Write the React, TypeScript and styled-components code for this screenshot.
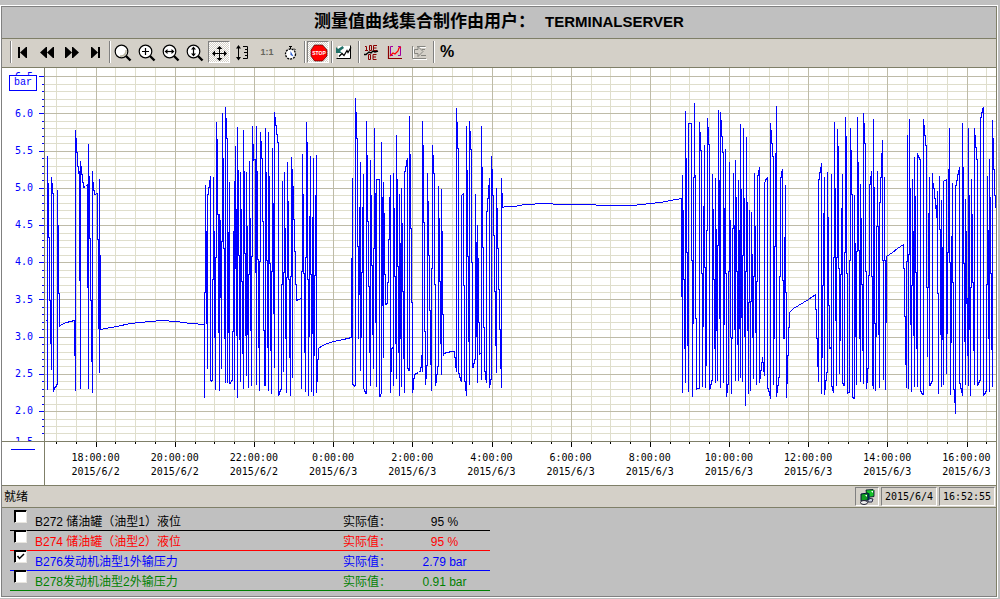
import React, { useState } from "react";
import styled, { createGlobalStyle, css } from "styled-components";

const color = {
  face: "#d4d0c8",
  back: "#c0c0c0",
  edge: "#7f7f68",
  shadow: "#808080",
  blue: "#0000ff",
  gridMinor: "#dfdecc",
  gridMajor: "#bebba8",
};

const sans = `"Liberation Sans", "Noto Sans CJK SC", sans-serif`;
const mono = `"DejaVu Sans Mono", monospace`;

const GlobalStyle = createGlobalStyle`
  body {
    margin: 0;
    background: ${color.back};
    font-family: ${sans};
    font-size: 12px;
    color: #000;
  }
  * { box-sizing: border-box; }
`;

const Highlight = styled.main`
  margin: 5px 2px 0 0;
  border: 1px solid #fff;
`;

const Frame = styled.div`
  border: 1px solid ${color.shadow};
  border-right-color: ${color.edge};
`;

const TitleBar = styled.h1`
  display: flex;
  align-items: center;
  justify-content: center;
  gap: 10px;
  height: 32px;
  margin: 0;
  padding-bottom: 1px;
  border-bottom: 1px solid ${color.edge};
  font-size: 17px;
  font-weight: bold;
  line-height: 24px;
`;

const UserName = styled.span`
  font-size: 15px;
`;

/* ---------- toolbar ---------- */

const Toolbar = styled.div`
  display: flex;
  align-items: flex-start;
  height: 29px;
  padding: 2px 0 0 8px;
  background: ${color.face};
  border-bottom: 1px solid ${color.edge};
`;

const Separator = styled.span<{ $gap?: number }>`
  width: 2px;
  height: 22px;
  margin-left: ${(p) => p.$gap ?? 1}px;
  border-left: 1px solid ${color.shadow};
  border-right: 1px solid #fff;
`;

const ToolButton = styled.button<{ $pressed?: boolean }>`
  display: flex;
  align-items: center;
  justify-content: center;
  flex: none;
  width: 22px;
  height: 22px;
  margin: 0 1px;
  padding: 0;
  border: 1px solid transparent;
  background: none;
  color: #000;
  font-family: ${sans};
  ${(p) =>
    p.$pressed &&
    css`
      border-color: ${color.shadow} #fff #fff ${color.shadow};
      background: repeating-conic-gradient(#fff 0 25%, ${color.face} 0 50%) 0 0 / 2px 2px;
    `}
`;

const RatioText = styled.span`
  color: #66655e;
  font-size: 9px;
  font-weight: bold;
`;

const PercentText = styled.span`
  font-size: 16px;
  font-weight: bold;
  line-height: 20px;
`;

const IconSvg = styled.svg`
  display: block;
  flex: none;
  width: 20px;
  height: 20px;
`;

const Icon = ({ children }: { children: React.ReactNode }) => (
  <IconSvg viewBox="0 0 20 20" aria-hidden="true">
    {children}
  </IconSvg>
);

const Lens = ({ children }: { children?: React.ReactNode }) => (
  <Icon>
    <circle cx="8.5" cy="9.5" r="6.3" fill="#fff" stroke="#000" strokeWidth="1.2" />
    <path d="M13 14l4.5 4.5" stroke="#000" strokeWidth="2.4" />
    {children}
  </Icon>
);

const icons = {
  first: (
    <Icon>
      <path d="M4 5h2v11H4zM6 10.5L12 5h1v11h-1z" />
    </Icon>
  ),
  back: (
    <Icon>
      <path d="M2 10.500L8 5h1v11H8zM9 10.500L15 5h1v11h-1z" />
    </Icon>
  ),
  forward: (
    <Icon>
      <path d="M3 5h1l6 5.500L4 16H3zM10 5h1l6 5.500-6 5.500h-1z" />
    </Icon>
  ),
  last: (
    <Icon>
      <path d="M5 5h1l6 5.500L6 16H5zM12 5h2v11h-2z" />
    </Icon>
  ),
  zoom: (
    <Lens>
      <path d="M13 8a5 5 0 0 1-6 6" fill="none" stroke="#bdb9a5" strokeWidth="1.6" />
    </Lens>
  ),
  zoomIn: (
    <Lens>
      <path d="M8.5 6v7M5 9.5h7" stroke="#000" strokeWidth="1.2" />
    </Lens>
  ),
  zoomX: (
    <Lens>
      <path d="M5 9.5h7" stroke="#000" strokeWidth="1.2" />
      <path d="M3.5 9.5L6.5 7v5zM13.5 9.5L10.500 7v5z" />
    </Lens>
  ),
  zoomY: (
    <Lens>
      <path d="M8.5 6v7" stroke="#000" strokeWidth="1.2" />
      <path d="M8.500 4.500L6 7.500h5zM8.500 14.500L6 11.500h5z" />
    </Lens>
  ),
  move: (
    <Icon>
      <path d="M10.500 6v11M5 11.500h11" stroke="#000" />
      <path d="M10.500 4l-3 3h6zM10.500 19l-3-3h6zM3 11.500l3-3v6zM18 11.500l-3-3v6z" />
    </Icon>
  ),
  scale: (
    <Icon>
      <path d="M5.500 5v12" stroke="#000" />
      <path d="M5.500 3L3 6.500h5zM5.500 18.500L3 15h5z" />
      <path d="M10 4.500h4.500v12H10M12 7.500h2.500M11 10.500h3.500M12 13.500h2.500" fill="none" stroke="#000" />
    </Icon>
  ),
  clock: (
    <Icon>
      <path d="M8 4.500h3M9.500 4.500v3M13 6.500l1.500 1.500" stroke="#000" />
      <circle cx="9.500" cy="12" r="5" fill="#fff" stroke="#000" strokeDasharray="2 1" strokeWidth="1.300" />
      <path d="M9.500 9v4l3 1.500z" fill="#2a5bd0" />
    </Icon>
  ),
  stop: (
    <Icon>
      <path d="M6.500 3h8L19 8v6l-4.500 5h-8L3 14V8z" fill="#f00" stroke="#400" strokeWidth=".7" />
      <text x="11" y="13" textAnchor="middle" fill="#fff" fontSize="5" fontWeight="bold">
        STOP
      </text>
    </Icon>
  ),
  restore: (
    <Icon>
      <path d="M3 4h12v13H3z" fill="#fff" />
      <path d="M1.500 16.500h14v-13" fill="none" stroke="#000" />
      <path d="M4 14.500l3-3 2 2 3-5 1 2 3-5" fill="none" stroke="#000" strokeWidth="1.300" />
      <path d="M1 5v6h6L5 9l4-3-1.500-2L3 7z" fill="#1f6f66" />
    </Icon>
  ),
  exponent: (
    <Icon>
      <path
        d="M3 4.500h1.500V9M3 8.500h3M9.500 3.500h-2v5h2zM15 3.500h-3.500v5H15M11.500 6h3M6.500 12.500h2v5h-2zM14.500 12.500H11v5h3.500M11 15h3"
        fill="none"
        stroke="#8b0000"
      />
      <path d="M2 12.500h2l3-2.500 2 1 2-2 2 1 3-1" fill="none" stroke="#000" strokeWidth="1.400" />
    </Icon>
  ),
  bounds: (
    <Icon>
      <path d="M2.500 4v12.500H16" fill="none" stroke="#8b0000" strokeWidth="1.200" />
      <path d="M7 4.500H4.500v9H7M12 4.500h2.500v9H12" fill="none" stroke="#a000a0" />
      <path d="M4 14l3-3 2 1 3-3 1-3 2-1" fill="none" stroke="#f00" strokeWidth="1.200" />
    </Icon>
  ),
  exportCurve: (
    <Icon>
      <path d="M3.500 5v12.500H17M8 5.500h8M12 13.500h4" fill="none" stroke="#fff" />
      <path d="M2.500 4v12.500H16M7 4.500h8.500M11 13.500h5M12 7.500h3" fill="none" stroke="#858580" />
      <path d="M4.500 7.500h3.500v-3l5 5-5 5v-3H4.500z" fill="#d4d0c8" stroke="#858580" />
    </Icon>
  ),
};

/* ---------- chart ---------- */

const Chart = styled.section`
  display: grid;
  grid-template-columns: 43px minmax(0, 1fr);
  background: #fff;
  border-bottom: 1px solid ${color.edge};
`;

const ValueAxis = styled.div`
  position: relative;
  display: flex;
  height: 373px;
  overflow: hidden;
  border-right: 1px solid ${color.edge};
  color: ${color.blue};
  font: 10px/12px ${mono};
`;

/* The lowest label is held just inside the axis, so its top edge stays visible. */
const ValueLabels = styled.div`
  display: grid;
  grid-auto-rows: minmax(0, 1fr);
  align-items: center;
  justify-items: end;
  flex: 1;
  height: 409px;
  margin-top: -10px;
  padding-right: 5px;

  span:last-child {
    align-self: start;
    padding-top: 6px;
  }
`;

const UnitBadge = styled.div`
  position: absolute;
  top: 7px;
  left: 7px;
  width: 28px;
  border: 1px solid ${color.blue};
  background: #fff;
  text-align: center;
  font: 10px/14px "Liberation Mono", monospace;
`;

const AxisTicks = styled.svg`
  display: block;
  flex: none;
  width: 6px;
  height: 373px;
`;

const Plot = styled.svg`
  display: block;
  width: 100%;
  height: 373px;

  path {
    fill: none;
    vector-effect: non-scaling-stroke;
  }
`;

const PenCell = styled.div`
  border-top: 1px solid ${color.edge};
  border-right: 1px solid ${color.edge};
  padding: 7px 9px;
`;

const PenLine = styled.div`
  height: 1px;
  background: ${color.blue};
`;

const TimeAxis = styled.div`
  overflow: hidden;
  border-top: 1px solid ${color.edge};
`;

const TimeTicks = styled.svg`
  display: block;
  width: 100%;
  height: 5px;
`;

const TimeLabels = styled.div`
  display: grid;
  grid-auto-flow: column;
  grid-auto-columns: minmax(0, 1fr);
  margin: 0 -10px 0 11px;
  padding: 4px 0 6px;
  text-align: center;
  font: 10px/14px ${mono};
`;

const yAt = (v: number) => Math.floor(411.6 - (v - 2) * 74.4);
const xAt = (h: number) => Math.floor(96.2 + (h - 18) * 39.585);

const gridRows = Array.from({ length: 50 }, (_, i) => ({ y: yAt(1.6 + i / 10 + 0.0001), major: (i + 1) % 5 === 0 })).filter(
  (r) => r.y >= 68
);
const gridColumns = Array.from({ length: 48 }, (_, i) => ({
  x: xAt(17 + i / 2),
  major: i % 4 === 2,
})).filter((c) => c.x < 996);

const rowPath = (major: boolean) =>
  gridRows.filter((r) => r.major === major).map((r) => `M45 ${r.y + 0.5}H996`).join("");
const columnPath = (major: boolean) =>
  gridColumns.filter((c) => c.major === major).map((c) => `M${c.x + 0.5} 68V441`).join("");

/* Pressure swings: each entry is a column with its highest and lowest point. */
const swings = `
47 156 389,48 183 237,49 237 300,50 300 343,51 177 369,52 183 193,53 193 391,54 387 389,55 386 387,56 384 386,57 190 384,
58 225 293,59 293 326,74 320 355,75 130 390,76 138 152,77 152 166,78 166 173,79 171 280,80 161 388,81 166 174,82 174 182,
83 182 187,87 184 287,88 144 388,89 176 238,90 238 300,91 300 361,92 171 392,93 182 190,94 190 194,97 193 239,98 239 328,
99 179 372,100 255 329,204 292 397,205 185 292,206 231 323,207 194 368,208 187 194,209 180 187,210 176 380,211 380 381,
212 279 380,213 177 279,214 231 337,215 257 389,216 122 257,217 139 214,218 214 332,219 214 390,220 220 297,221 241 368,
222 113 241,223 158 248,224 248 338,225 107 382,226 118 138,227 138 382,228 232 332,229 182 383,230 382 383,231 380 381,
232 331 380,233 231 331,234 181 389,235 146 268,236 209 335,237 127 397,238 170 255,239 255 339,240 172 381,241 209 281,
242 281 353,243 130 388,244 171 253,245 253 335,246 172 375,247 226 334,248 274 387,249 161 274,250 218 330,251 256 385,
252 126 256,253 144 160,255 159 272,256 126 384,257 171 259,258 259 347,259 261 390,260 132 261,261 141 158,262 158 221,
263 221 330,264 330 385,265 128 385,266 172 260,267 260 347,268 132 390,269 176 263,270 263 350,271 271 393,272 148 271,
273 203 313,274 112 367,275 117 125,276 125 134,277 134 142,278 142 395,279 391 394,280 389 391,281 284 389,282 181 284,
283 272 371,284 172 272,285 228 338,286 277 392,287 162 277,288 201 279,289 279 357,290 276 395,291 157 276,292 169 377,
293 186 219,294 219 251,295 251 284,296 284 300,301 271 388,302 154 271,303 194 273,304 273 352,305 257 391,306 122 257,
307 142 279,308 279 395,309 216 336,310 156 274,311 274 391,312 217 333,313 158 395,314 275 355,315 195 275,316 155 392,
317 359 381,318 348 359,351 258 337,352 178 384,353 384 385,354 385 386,355 98 385,356 112 138,357 138 246,358 246 338,
359 207 294,360 162 370,361 272 337,362 207 272,363 174 388,364 389 391,365 391 393,366 121 393,367 155 221,368 221 286,
369 286 352,370 160 385,371 195 265,372 265 334,373 248 368,374 128 248,375 193 322,376 179 386,379 179 396,380 394 396,
381 142 393,382 197 305,383 182 357,384 213 274,385 274 304,386 303 304,387 282 303,388 239 282,389 197 239,390 175 392,
391 348 371,393 173 385,394 208 276,395 276 343,396 135 378,397 179 266,398 266 352,399 194 395,400 243 338,401 188 386,
402 223 291,403 291 358,404 171 392,405 166 171,406 160 166,407 158 368,408 368 370,409 116 370,410 154 228,411 228 302,
412 302 392,413 378 389,414 374 378,420 367 371,421 355 367,422 121 371,423 145 222,424 222 331,425 331 384,426 365 378,
427 173 365,428 201 255,429 255 310,430 310 364,431 268 390,432 145 268,433 155 173,434 173 284,435 284 385,436 374 382,
437 366 374,438 186 366,439 218 281,440 281 343,441 189 374,442 231 314,443 314 355,454 351 357,455 357 367,456 108 371,
457 122 148,458 148 373,459 373 377,460 377 380,461 195 381,463 193 285,464 285 381,465 381 390,466 126 395,467 170 256,
468 256 341,469 121 384,470 131 149,471 149 262,472 262 367,473 363 367,474 359 363,475 194 359,476 242 336,477 225 382,
478 258 322,479 322 354,481 126 379,482 167 247,483 247 327,484 327 371,485 371 379,486 211 382,487 198 211,488 185 198,
489 178 387,490 379 384,491 156 379,492 169 195,493 195 235,494 235 291,495 291 345,496 188 372,497 208 248,498 248 289,
499 289 329,500 329 368,501 178 387,502 193 206,681 198 296,682 175 392,683 210 279,684 279 348,685 111 382,686 158 252,
687 252 345,688 123 391,691 123 260,692 260 396,693 177 323,694 103 177,695 175 318,696 318 389,699 122 388,700 132 150,
701 150 273,702 273 386,703 206 326,704 145 267,705 267 387,706 230 365,707 118 230,708 127 144,709 144 389,710 384 388,
711 380 384,712 174 380,713 209 279,714 279 348,715 178 382,716 229 330,717 245 380,718 110 245,719 180 318,720 112 387,
721 120 136,722 136 152,723 152 382,724 208 324,725 149 273,726 273 396,727 384 392,728 271 384,729 162 271,730 220 337,
731 337 393,732 228 338,733 173 228,734 225 329,735 160 380,736 197 271,737 271 344,738 180 380,739 230 328,740 124 377,
741 189 317,742 255 381,743 128 255,744 198 336,745 271 405,746 137 271,747 202 330,748 302 393,749 210 302,750 301 390,
751 212 301,752 254 337,753 276 378,754 173 276,755 226 332,756 281 384,757 175 281,758 170 175,759 167 382,760 370 378,
761 362 370,762 357 362,763 362 371,764 182 375,765 179 181,766 178 179,767 177 388,768 388 391,769 391 395,770 123 398,
771 130 143,772 143 156,773 156 384,774 246 338,775 153 246,776 106 396,777 385 392,778 377 385,779 276 377,780 177 276,
781 171 177,782 169 280,783 280 338,784 237 338,785 185 292,786 292 397,787 355 383,788 327 355,789 312 327,815 294 309,
816 309 338,817 338 366,818 179 381,819 172 179,820 167 172,821 163 393,822 285 357,823 213 285,824 177 394,825 380 389,
826 372 380,827 172 372,828 217 305,829 305 348,830 347 348,831 174 386,832 386 390,833 257 392,834 122 257,835 188 320,
836 257 385,837 129 257,838 146 268,839 268 373,840 274 340,841 208 274,842 174 383,843 383 385,844 252 385,845 117 252,
846 136 273,847 273 393,849 260 392,850 128 260,851 150 194,852 194 397,853 397 398,854 195 398,855 243 336,856 251 384,
857 117 251,858 162 250,859 250 338,860 184 381,861 218 284,862 284 350,863 113 383,864 123 143,865 143 271,866 271 388,
867 368 382,868 275 368,869 184 275,870 176 184,871 171 276,872 276 385,873 119 388,874 187 323,875 323 390,876 226 336,
877 171 226,878 226 334,879 202 387,880 177 202,881 153 177,882 140 260,883 260 379,884 177 260,885 260 389,886 256 322,
903 244 268,904 268 316,905 316 364,906 261 387,907 135 261,908 254 388,909 119 254,910 188 324,911 285 391,912 179 285,
913 231 335,914 157 386,915 196 272,916 272 348,917 153 386,918 155 157,919 157 159,920 159 391,921 391 393,922 393 394,
923 119 394,924 125 135,925 135 145,926 145 287,927 287 356,928 213 287,929 177 385,930 383 385,931 381 383,932 173 381,
933 183 188,934 188 198,935 198 208,936 205 217,937 191 293,938 293 393,939 176 229,940 229 334,941 200 386,942 247 339,
943 181 384,946 179 373,947 252 333,948 169 252,949 128 262,950 262 394,951 236 342,952 183 282,953 282 389,954 389 402,
955 185 413,956 180 185,957 174 180,958 170 174,959 167 383,960 383 388,961 388 392,962 123 395,963 167 263,964 263 341,
965 199 384,966 231 303,967 298 355,968 128 385,969 195 329,970 287 395,971 179 287,972 214 282,973 282 350,974 128 384,
975 135 147,976 147 159,977 159 385,978 382 384,979 380 382,980 117 380,981 112 117,982 108 112,983 107 395,984 393 394,
985 391 393,986 284 391,987 176 284,988 230 338,989 159 391,990 197 273,991 273 349,992 120 386,993 138 169,994 169 195,
995 195 207`;

const swingPath = swings
  .split(",")
  .map((entry) => entry.trim().split(" ").map(Number))
  .map(([x, top, bottom]) => `M${x + 0.5} ${top}V${bottom + 1}`)
  .join("");

/* Slow drifts between the pumping phases. */
const drifts = [
  "45,321 47,319",
  "59,325 66,322 74,320",
  "83,187 85,186 87,184",
  "94,194 97,193",
  "100,329 105,328 116,326 130,323 150,321 161,320 176,321 190,323 204,324",
  "253,159 255,159",
  "296,300 298,299 301,298",
  "318,348 322,345 327,343 333,341 343,339 351,337",
  "376,179 379,179",
  "391,348 393,347",
  "414,374 418,372 420,370",
  "443,353 447,352 451,351 454,351",
  "461,195 463,193",
  "479,353 481,353",
  "502,207 505,206 514,206 524,204 545,203 560,204 580,204 610,205 632,205 650,203 660,202 670,200 682,198",
  "688,123 691,123",
  "696,389 699,387",
  "789,312 793,308 798,305 803,302 808,299 815,294",
  "847,392 849,392",
  "886,256 892,252 897,248 903,244",
  "943,181 946,179",
];
const driftPath = drifts.map((d) => `M${d.split(" ").join("L")}`).join("");

const valueLabels = ["6.5", "6.0", "5.5", "5.0", "4.5", "4.0", "3.5", "3.0", "2.5", "2.0", "1.5"];
const timeLabels = [
  ["18:00:00", "2015/6/2"],
  ["20:00:00", "2015/6/2"],
  ["22:00:00", "2015/6/2"],
  ["0:00:00", "2015/6/3"],
  ["2:00:00", "2015/6/3"],
  ["4:00:00", "2015/6/3"],
  ["6:00:00", "2015/6/3"],
  ["8:00:00", "2015/6/3"],
  ["10:00:00", "2015/6/3"],
  ["12:00:00", "2015/6/3"],
  ["14:00:00", "2015/6/3"],
  ["16:00:00", "2015/6/3"],
];

/* ---------- status bar ---------- */

const StatusBar = styled.footer`
  display: flex;
  align-items: center;
  gap: 2px;
  height: 22px;
  padding: 0 1px 0 2px;
  background: ${color.face};
  border-bottom: 1px solid ${color.edge};
`;

const StatusText = styled.span`
  flex: 1;
  line-height: 18px;
`;

const StatusCell = styled.span<{ $width: number }>`
  display: flex;
  align-items: center;
  justify-content: center;
  width: ${(p) => p.$width}px;
  height: 19px;
  border: 1px solid;
  border-color: ${color.shadow} #fff #fff ${color.shadow};
  font: 10px/16px ${mono};
`;

const NetworkSvg = styled.svg`
  width: 16px;
  height: 16px;
`;

/* ---------- legend ---------- */

const Legend = styled.ul`
  margin: 0;
  padding: 3px 8px 5px;
  list-style: none;
`;

const LegendRow = styled.li<{ $color: string }>`
  display: grid;
  grid-template-columns: 25px 308px 60px minmax(0, 1fr);
  align-items: start;
  max-width: 480px;
  height: 20px;
  border-bottom: 1px solid ${(p) => p.$color};
  color: ${(p) => p.$color};
  line-height: 22px;
  white-space: nowrap;
`;

const CurveCheck = styled.input`
  appearance: none;
  width: 13px;
  height: 13px;
  margin: -1px 0 0 4px;
  border: 1px solid;
  border-color: #000 #e8e6e0 #e8e6e0 #000;
  background: #fff;
  box-shadow: inset 1px 1px 0 #000;

  &:checked {
    background: #fff
      url("data:image/svg+xml,%3Csvg xmlns='http://www.w3.org/2000/svg' viewBox='0 0 11 11'%3E%3Cpath d='M2.500 5l2 2.500L9 3' fill='none' stroke='%23000' stroke-width='1.500'/%3E%3C/svg%3E");
  }
`;

const CurveValue = styled.span`
  padding-right: 4px;
  text-align: center;
`;

const curves = [
  { id: "B272", name: "B272 储油罐（油型1）液位", value: "95 %", color: "#000000", on: false },
  { id: "B274", name: "B274 储油罐（油型2）液位", value: "95 %", color: "#ff0000", on: false },
  { id: "B276", name: "B276发动机油型1外输压力", value: "2.79 bar", color: "#0000ff", on: true },
  { id: "B278", name: "B278发动机油型2外输压力", value: "0.91 bar", color: "#008000", on: false },
];

export default function App() {
  const [visible, setVisible] = useState<string[]>(curves.filter((c) => c.on).map((c) => c.id));
  const toggle = (id: string) =>
    setVisible((ids) => (ids.includes(id) ? ids.filter((i) => i !== id) : [...ids, id]));

  return (
    <>
      <GlobalStyle />
      <Highlight>
        <Frame>
          <TitleBar>
            <span>测量值曲线集合制作由用户：</span>
            <UserName>TERMINALSERVER</UserName>
          </TitleBar>

          <Toolbar role="toolbar">
            <Separator $gap={0} />
            <ToolButton aria-label="First record">{icons.first}</ToolButton>
            <ToolButton aria-label="Back">{icons.back}</ToolButton>
            <ToolButton aria-label="Forward">{icons.forward}</ToolButton>
            <ToolButton aria-label="Last record">{icons.last}</ToolButton>
            <Separator />
            <ToolButton aria-label="Zoom">{icons.zoom}</ToolButton>
            <ToolButton aria-label="Zoom in">{icons.zoomIn}</ToolButton>
            <ToolButton aria-label="Zoom time axis">{icons.zoomX}</ToolButton>
            <ToolButton aria-label="Zoom value axis">{icons.zoomY}</ToolButton>
            <ToolButton aria-label="Move" aria-pressed="true" $pressed>
              {icons.move}
            </ToolButton>
            <ToolButton aria-label="Move axes">{icons.scale}</ToolButton>
            <ToolButton>
              <RatioText>1:1</RatioText>
            </ToolButton>
            <ToolButton aria-label="Time range">{icons.clock}</ToolButton>
            <Separator />
            <ToolButton aria-label="Stop" aria-pressed="true" $pressed>
              {icons.stop}
            </ToolButton>
            <Separator />
            <ToolButton aria-label="Restore curve">{icons.restore}</ToolButton>
            <Separator />
            <ToolButton aria-label="Exponent">{icons.exponent}</ToolButton>
            <ToolButton aria-label="Bounds">{icons.bounds}</ToolButton>
            <ToolButton aria-label="Export">{icons.exportCurve}</ToolButton>
            <Separator />
            <ToolButton>
              <PercentText>%</PercentText>
            </ToolButton>
          </Toolbar>

          <Chart>
            <ValueAxis>
              <ValueLabels>
                {valueLabels.map((v) => (
                  <span key={v}>{v}</span>
                ))}
              </ValueLabels>
              <AxisTicks viewBox="0 68 6 373" shapeRendering="crispEdges">
                <path
                  d={gridRows.map((r) => `M${r.major ? 1 : 4} ${r.y + 0.5}H6`).join("")}
                  stroke={color.blue}
                />
              </AxisTicks>
              <UnitBadge>bar</UnitBadge>
            </ValueAxis>
            <Plot viewBox="45 68 951 373" preserveAspectRatio="none" shapeRendering="crispEdges">
              <path d={rowPath(false) + columnPath(false)} stroke={color.gridMinor} />
              <path d={rowPath(true) + columnPath(true)} stroke={color.gridMajor} />
              <path d={swingPath} stroke={color.blue} />
              <path d={driftPath} stroke={color.blue} transform="translate(.5 .5)" />
            </Plot>
            <PenCell>
              <PenLine />
            </PenCell>
            <TimeAxis>
              <TimeTicks viewBox="45 0 951 5" preserveAspectRatio="none" shapeRendering="crispEdges">
                <path
                  d={gridColumns.map((c) => `M${c.x + 0.5} 0V${c.major ? 5 : 2}`).join("")}
                  stroke="#000"
                />
              </TimeTicks>
              <TimeLabels>
                {timeLabels.map(([time, date]) => (
                  <div key={time}>
                    <div>{time}</div>
                    <div>{date}</div>
                  </div>
                ))}
              </TimeLabels>
            </TimeAxis>
          </Chart>

          <StatusBar>
            <StatusText>就绪</StatusText>
            <StatusCell $width={24}>
              <NetworkSvg viewBox="0 0 16 16" aria-hidden="true">
                <path d="M7 1l7-.5 1 1v6L8 8.500z" fill="#17c22b" stroke="#002" strokeWidth=".8" />
                <path d="M9 9l5 1-1 3H9z" fill="#c8d0e0" stroke="#002" strokeWidth=".8" />
                <path d="M2 5l7-1v7l-7 1z" fill="#119c22" stroke="#013" strokeWidth="1" />
                <path d="M9 4l1.500.5V11L9 11z" fill="#002850" />
                <ellipse cx="5" cy="13.500" rx="3.500" ry="2" fill="#eee" stroke="#223" />
                <path d="M6 6h2v2zM12 2h2v2z" fill="#fff" />
              </NetworkSvg>
            </StatusCell>
            <StatusCell $width={56}>2015/6/4</StatusCell>
            <StatusCell $width={56}>16:52:55</StatusCell>
          </StatusBar>

          <Legend>
            {curves.map((c) => (
              <LegendRow key={c.id} $color={c.color}>
                <CurveCheck
                  type="checkbox"
                  id={c.id}
                  checked={visible.includes(c.id)}
                  onChange={() => toggle(c.id)}
                />
                <label htmlFor={c.id}>{c.name}</label>
                <span>实际值：</span>
                <CurveValue>{c.value}</CurveValue>
              </LegendRow>
            ))}
          </Legend>
        </Frame>
      </Highlight>
    </>
  );
}
